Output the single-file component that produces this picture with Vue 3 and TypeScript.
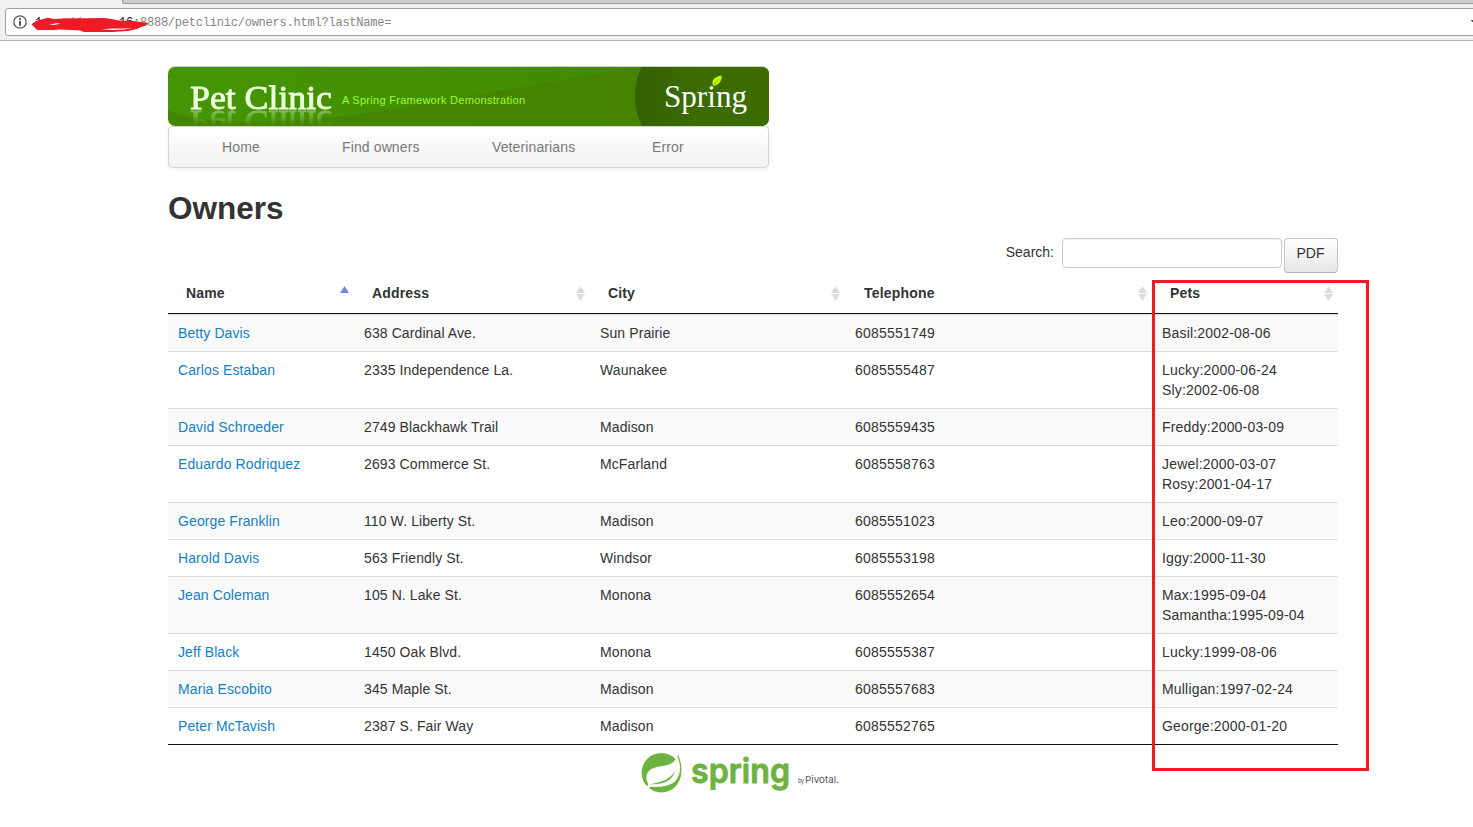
<script setup lang="ts">
interface Owner {
  name: string
  address: string
  city: string
  telephone: string
  pets: string[]
}

const nav: { label: string; cls: string }[] = [
  { label: 'Home', cls: 'home' },
  { label: 'Find owners', cls: 'find' },
  { label: 'Veterinarians', cls: 'vets' },
  { label: 'Error', cls: 'error' },
]

const columns: string[] = ['Name', 'Address', 'City', 'Telephone', 'Pets']

const owners: Owner[] = [
  { name: 'Betty Davis', address: '638 Cardinal Ave.', city: 'Sun Prairie', telephone: '6085551749', pets: ['Basil:2002-08-06'] },
  { name: 'Carlos Estaban', address: '2335 Independence La.', city: 'Waunakee', telephone: '6085555487', pets: ['Lucky:2000-06-24', 'Sly:2002-06-08'] },
  { name: 'David Schroeder', address: '2749 Blackhawk Trail', city: 'Madison', telephone: '6085559435', pets: ['Freddy:2000-03-09'] },
  { name: 'Eduardo Rodriquez', address: '2693 Commerce St.', city: 'McFarland', telephone: '6085558763', pets: ['Jewel:2000-03-07', 'Rosy:2001-04-17'] },
  { name: 'George Franklin', address: '110 W. Liberty St.', city: 'Madison', telephone: '6085551023', pets: ['Leo:2000-09-07'] },
  { name: 'Harold Davis', address: '563 Friendly St.', city: 'Windsor', telephone: '6085553198', pets: ['Iggy:2000-11-30'] },
  { name: 'Jean Coleman', address: '105 N. Lake St.', city: 'Monona', telephone: '6085552654', pets: ['Max:1995-09-04', 'Samantha:1995-09-04'] },
  { name: 'Jeff Black', address: '1450 Oak Blvd.', city: 'Monona', telephone: '6085555387', pets: ['Lucky:1999-08-06'] },
  { name: 'Maria Escobito', address: '345 Maple St.', city: 'Madison', telephone: '6085557683', pets: ['Mulligan:1997-02-24'] },
  { name: 'Peter McTavish', address: '2387 S. Fair Way', city: 'Madison', telephone: '6085552765', pets: ['George:2000-01-20'] },
]
</script>

<template>
  <div class="screen">
    <header class="chrome">
      <div class="tabs"><div class="tabstrip"></div></div>
      <div class="urlbar">
        <svg class="info" width="14" height="14" viewBox="0 0 14 14">
          <circle cx="7" cy="7" r="6.2" fill="none" stroke="#555" stroke-width="1.3" />
          <rect x="6.1" y="3" width="1.8" height="1.8" fill="#444" />
          <rect x="6.1" y="5.8" width="1.8" height="5" fill="#444" />
        </svg>
        <span class="host">1</span><span class="host end">16</span><span class="path">:8888/petclinic/owners.html?lastName=</span>
        <svg class="scribble" width="120" height="18" viewBox="30 15 120 18">
          <path d="M31.5 24.3 L36 21 L44 18.8 L48 17.8 L54 19 L66 18.3 L85 18.3 L104 18 L113 19.2 L119 20.5 L134 21 L148 23 L147 25 L141 27 L137 29 L128 31 L112 32 L84 32 L80 30.5 L72 30 L60 29.5 L54 30 L37 30 Z" fill="#ed1c24" />
          <path d="M101 29.6 L112 28.6 L121 28.4 L133 28.3 L124 29.4 L112 30 Z M49 25 L56 23.3 L61 23.5 L54 25 Z" fill="#fff" />
          <path d="M72.5 18.6 l1-1.4 M79.5 18.6 l1-1.4" stroke="#666" stroke-width="1" />
        </svg>
        <svg class="drop" width="2" height="4" viewBox="0 0 2 4"><path d="M0 1h2v1h-2zM1 2h1v1h-1z" fill="#555" /></svg>
      </div>
    </header>

    <main class="container">
      <div class="masthead">
        <svg class="banner" width="601" height="60" viewBox="0 0 601 60">
          <defs>
            <linearGradient id="bg" x1="0" x2="1"><stop offset="0" stop-color="#449503" /><stop offset=".5" stop-color="#438f02" /><stop offset="1" stop-color="#458403" /></linearGradient>
            <linearGradient id="dark" x1="0" x2="1"><stop offset="0" stop-color="#336002" /><stop offset=".45" stop-color="#3c6c00" /></linearGradient>
            <clipPath id="round"><rect x="0" y="1" width="601" height="59" rx="7" /></clipPath>
          </defs>
          <rect width="601" height="20" rx="7" fill="#ccd2c8" />
          <g clip-path="url(#round)">
            <rect width="601" height="60" fill="url(#bg)" />
            <path d="M0 44 Q28 56 78 56 C150 56 205 47 285 33 Q390 15 475 0 L601 0 V60 H0Z" fill="#458102" opacity=".72" />
            <path d="M474 0 Q460 30 474 60 H601 V0Z" fill="url(#dark)" />
          </g>
          <text class="tagline" x="174" y="38" textLength="183">A Spring Framework Demonstration</text>
          <text class="spring" x="496" y="41" textLength="83" lengthAdjust="spacingAndGlyphs">Spring</text>
          <path d="M545 20 C543 13 547 11 553.5 9.5 C554 15 551 19 545 20Z" fill="#c4ff00" /><path d="M544.5 20.5 L551 13" stroke="#6c9c00" stroke-width=".7" />
        </svg>
        <svg class="title" width="180" height="44" viewBox="0 0 180 44">
          <text class="brand" x="22" y="43" textLength="142" lengthAdjust="spacingAndGlyphs">Pet Clinic</text>
        </svg>
      </div>

      <nav class="navbar">
        <a v-for="n in nav" :key="n.label" :class="n.cls">{{ n.label }}</a>
      </nav>

      <h1>Owners</h1>

      <div class="tools">
        <label>Search:</label>
        <input type="text" />
        <button type="button">PDF</button>
      </div>

      <table>
        <colgroup><col class="c1" /><col class="c2" /><col class="c3" /><col class="c4" /><col class="c5" /></colgroup>
        <thead>
          <tr>
            <th v-for="(c, i) in columns" :key="c" :class="{ wide: i === 3 }">
              <div class="th">
                <span>{{ c }}</span>
                <svg width="9" height="15" viewBox="0 0 9 15">
                  <path v-if="i === 0" d="M4.5 0 L9 7 H0Z" fill="#7a82dc" />
                  <path v-else d="M4.5 0 L9 7 H0Z M0 8 H9 L4.5 15Z" fill="#dcdcdc" />
                </svg>
              </div>
            </th>
          </tr>
        </thead>
        <tbody>
          <tr v-for="o in owners" :key="o.name">
            <td><a>{{ o.name }}</a></td>
            <td>{{ o.address }}</td>
            <td>{{ o.city }}</td>
            <td class="phone">{{ o.telephone }}</td>
            <td class="pets"><div v-for="p in o.pets" :key="p">{{ p }}</div></td>
          </tr>
        </tbody>
      </table>

      <footer>
        <svg width="200" height="42" viewBox="0 0 200 42">
          <circle cx="20.3" cy="19.8" r="19.7" fill="#6db33f" />
          <path d="M36.6 2.5 C34 9 30 12.2 20 13.2 C8 14.6 3.6 20.5 6 28.5 L8.5 33.5 C16 34.5 28 34 34 28.5 C41 21 39.5 10 36.6 2.5Z" fill="#fff" />
          <path d="M34.2 17.5 C29.5 26 21 29.5 8.5 31.2 C22 32 31.5 28 34.2 17.5Z" fill="#6db33f" />
          <path d="M36.8 2.5 C40.6 12 40.6 21 37.6 27" fill="none" stroke="#6db33f" stroke-width="1.2" />
          <circle cx="8" cy="33.3" r="1.7" fill="#fff" />
          <text class="logo" x="50" y="29.5" textLength="99" lengthAdjust="spacingAndGlyphs">spring</text>
          <text class="by" x="157" y="29.5" textLength="6">by</text>
          <text class="pivotal" x="164" y="29.8" textLength="34" lengthAdjust="spacingAndGlyphs">Pivotal.</text>
        </svg>
      </footer>
    </main>
    <div class="highlight"></div>
  </div>
</template>

<style>
body { margin: 0; background: #fff; overflow: hidden; }
</style>

<style scoped>
.screen { position: relative; width: 1473px; height: 827px; overflow: hidden; background: #fff; font: 14px/20px "Liberation Sans", Arial, sans-serif; color: #333; }
.chrome { box-sizing: border-box; height: 41px; background: #f0f0f0; border-bottom: 1px solid #b4b4b4; overflow: hidden; }
.tabs { height: 8px; padding-left: 122px; }
.tabstrip { height: 3px; background: #ccc; border-bottom: 1px solid #999; border-left: 1px solid #999; border-bottom-left-radius: 3px; }
.urlbar { position: relative; box-sizing: border-box; display: flex; align-items: center; width: 1480px; height: 28px; margin-left: 5px; padding-left: 7px; background: #fff; border: 1px solid #a0a0a0; border-radius: 3px; font: 12px/20px "Liberation Mono", monospace; letter-spacing: -0.22px; }
.info { margin-right: 8px; }
.host, .path { padding-top: 2px; }
.host { color: #111; }
.host.end { margin-left: 77px; }
.path { color: #858585; }
.scribble { position: absolute; left: 24px; top: 6px; }
.drop { position: absolute; left: 1465px; top: 10px; }
.container { width: 1170px; margin-left: 168px; padding-top: 25px; }
.masthead { position: relative; width: 601px; height: 60px; overflow: hidden; border-radius: 0 0 7px 7px; }
.banner { display: block; }
.title { position: absolute; left: 0; top: 0; -webkit-box-reflect: below 0 linear-gradient(transparent 64%, rgba(255, 255, 255, .4)); }
.brand { font: 34px "Liberation Serif", serif; fill: #edffdc; stroke: #edffdc; stroke-width: .9px; }
.tagline { font: 11px "Liberation Sans", Arial, sans-serif; fill: #9bff2b; }
.spring { font: 32px "Liberation Serif", serif; fill: #fff; }
.navbar { box-sizing: border-box; display: flex; align-items: center; width: 601px; height: 42px; padding-left: 53px; border: 1px solid #d4d4d4; border-radius: 4px; background: linear-gradient(#fff, #f2f2f2); box-shadow: 0 1px 4px rgba(0, 0, 0, .065); color: #777; letter-spacing: .12px; }
.navbar a { display: block; }
.home { width: 120px; }
.find { width: 150px; }
.vets { width: 160px; }
h1 { margin: 20px 0 10px; font-size: 31.5px; line-height: 40px; }
.tools { display: flex; justify-content: flex-end; align-items: flex-start; height: 35px; }
.tools label { margin: 4px 8px 0 0; }
.tools input { box-sizing: border-box; width: 220px; height: 30px; margin: 0 2px 0 0; border: 1px solid #ccc; border-radius: 4px; box-shadow: inset 0 1px 1px rgba(0, 0, 0, .075); background: #fff; }
.tools button { box-sizing: border-box; width: 54px; height: 35px; padding: 0 1px 5px 0; border: 1px solid #c4c4c4; border-bottom-color: #b3b3b3; border-radius: 4px; background: linear-gradient(#fff, #e6e6e6); color: #333; font: inherit; }
table { width: 1170px; table-layout: fixed; border-collapse: separate; border-spacing: 0; border-bottom: 1px solid #111; }
.c1 { width: 186px; }
.c2 { width: 236px; }
.c3 { width: 255px; }
.c4 { width: 307px; }
.c5 { width: 186px; }
th { padding: 10px 5px 10px 18px; border-bottom: 1px solid #111; text-align: left; font-weight: bold; letter-spacing: .15px; }
th.wide { padding-left: 19px; letter-spacing: .2px; }
.th { display: flex; justify-content: space-between; height: 20px; }
.th svg { margin-top: 3px; }
td { padding: 8px 10px; border-top: 1px solid #ddd; vertical-align: top; letter-spacing: .1px; }
td.phone { letter-spacing: .22px; }
td.pets { letter-spacing: .18px; }
tbody tr:nth-child(odd) td { background: #f9f9f9; }
td a { color: #1580c4; }
footer { display: flex; width: 1145px; justify-content: center; padding-top: 8px; }
footer svg { overflow: visible; }
.logo { font: 600 34px Inter, sans-serif; fill: #6db33f; stroke: #6db33f; stroke-width: .9px; stroke-linejoin: round; }
.by { font: 6px Inter, sans-serif; fill: #555; }
.pivotal { font: 9.5px Inter, sans-serif; fill: #555; }
.highlight { position: absolute; box-sizing: border-box; left: 1152px; top: 280px; width: 217px; height: 491px; border: 3px solid #ed1c24; }
</style>
